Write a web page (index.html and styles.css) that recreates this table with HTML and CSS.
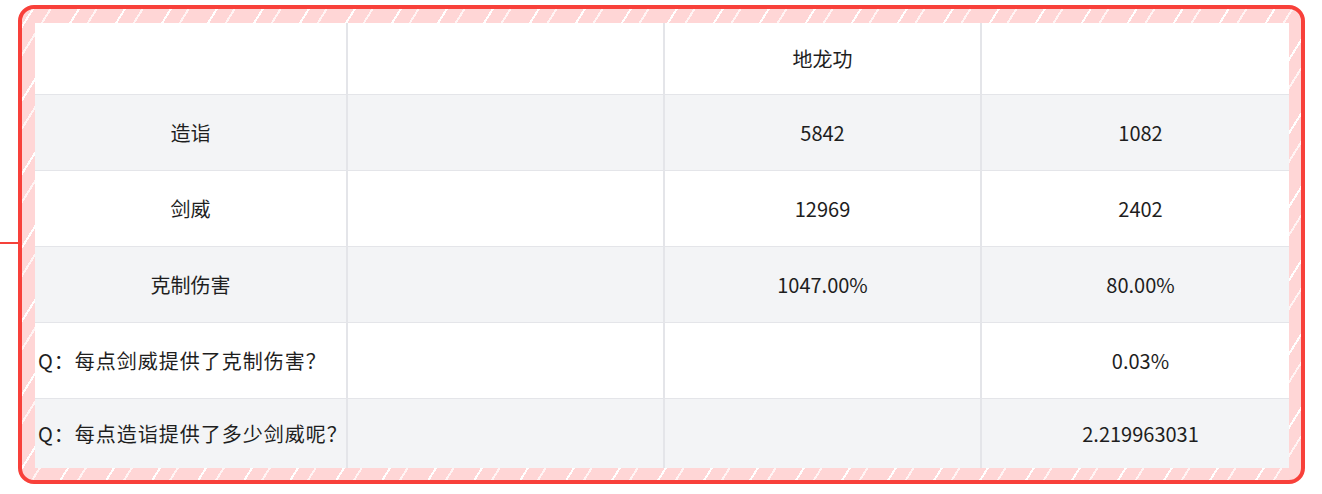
FILE: index.html
```html
<!DOCTYPE html>
<html lang="zh">
<head>
<meta charset="utf-8">
<link rel="stylesheet" href="styles.css">
</head>
<body>
<div class="stage">
  <div class="connector"></div>
  <div class="frame">
    <div class="sheet">
      <div class="row row-head">
        <div class="cell"></div>
        <div class="cell"></div>
        <div class="cell">地龙功</div>
        <div class="cell"></div>
      </div>
      <div class="row row-alt">
        <div class="cell">造诣</div>
        <div class="cell"></div>
        <div class="cell">5842</div>
        <div class="cell">1082</div>
      </div>
      <div class="row">
        <div class="cell">剑威</div>
        <div class="cell"></div>
        <div class="cell">12969</div>
        <div class="cell">2402</div>
      </div>
      <div class="row row-alt">
        <div class="cell">克制伤害</div>
        <div class="cell"></div>
        <div class="cell">1047.00%</div>
        <div class="cell">80.00%</div>
      </div>
      <div class="row">
        <div class="cell cell-left">Q：每点剑威提供了克制伤害？</div>
        <div class="cell"></div>
        <div class="cell"></div>
        <div class="cell">0.03%</div>
      </div>
      <div class="row row-alt row-last">
        <div class="cell cell-left">Q：每点造诣提供了多少剑威呢？</div>
        <div class="cell"></div>
        <div class="cell"></div>
        <div class="cell">2.219963031</div>
      </div>
    </div>
  </div>
</div>
</body>
</html>
```

FILE: styles.css
```css
html, body {
  margin: 0;
  padding: 0;
  background: #ffffff;
}

body {
  width: 1322px;
  height: 494px;
  overflow: hidden;
  font-family: "Noto Sans CJK SC", "Noto Sans", sans-serif;
  color: #1e1e1e;
}

.stage {
  position: relative;
  padding: 5px 0 0 18px;
}

.connector {
  position: absolute;
  left: 0;
  top: 242px;
  width: 19px;
  height: 2px;
  background: #f5413a;
}

.frame {
  width: 1287px;
  height: 479px;
  box-sizing: border-box;
  border: 4px solid #f8403a;
  border-radius: 16px;
  padding: 14px 12px 12px 13px;
  background:
    repeating-linear-gradient(-58deg,
      #ffd6d6 0px, #ffd6d6 22px,
      #fff4f4 22px, #fff4f4 24px,
      #ffd6d6 24px, #ffd6d6 37px,
      #ffffff 37px, #ffffff 39px);
}

.sheet {
  width: 100%;
  height: 100%;
  background: #ffffff;
  overflow: hidden;
  display: flex;
  flex-direction: column;
}

.row {
  display: grid;
  grid-template-columns: 313px 317px 317px 317px;
  height: 76px;
  flex: none;
  background: #ffffff;
  border-bottom: 1px solid #e4e5e9;
  box-sizing: border-box;
}

.row-head {
  height: 72px;
}

.row-last {
  flex: 1;
  height: auto;
  border-bottom: none;
}

.row-alt {
  background: #f3f4f6;
}

.cell {
  display: flex;
  align-items: center;
  justify-content: center;
  font-size: 20px;
  border-right: 2px solid #e4e5e9;
  white-space: nowrap;
}

.cell:last-child {
  border-right: none;
}

.cell-left {
  justify-content: flex-start;
  padding-left: 3px;
  letter-spacing: 1px;
}
```
